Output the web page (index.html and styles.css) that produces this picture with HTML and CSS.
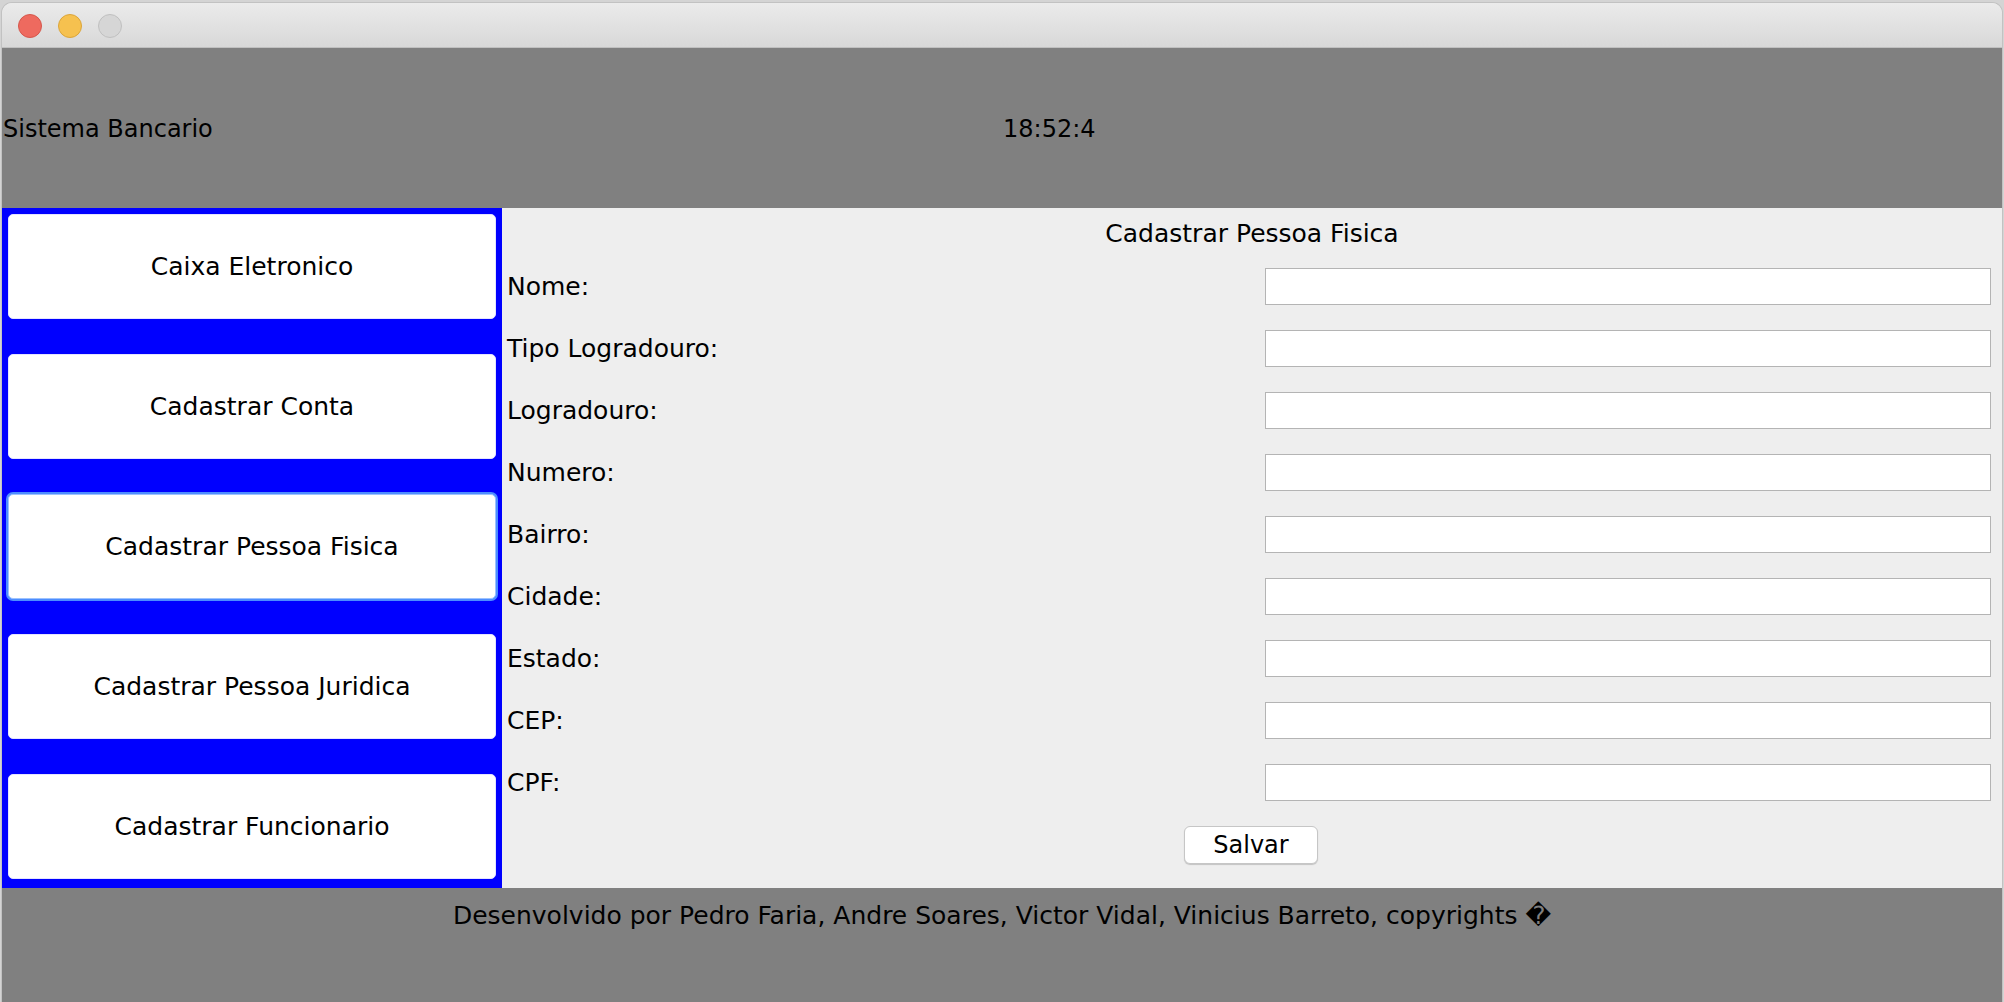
FILE: index.html
```html
<!DOCTYPE html>
<html lang="pt">
<head>
<meta charset="utf-8">
<title>Sistema Bancario</title>
<link rel="stylesheet" href="styles.css">
</head>
<body>
<div class="window">
  <div class="titlebar">
    <span class="light light-close"></span>
    <span class="light light-min"></span>
    <span class="light light-max"></span>
  </div>
  <header class="header">
    <div class="header-cell">Sistema Bancario</div>
    <div class="header-cell">18:52:4</div>
  </header>
  <div class="main">
    <nav class="sidebar">
      <button class="nav-btn">Caixa Eletronico</button>
      <button class="nav-btn">Cadastrar Conta</button>
      <button class="nav-btn nav-btn-focus">Cadastrar Pessoa Fisica</button>
      <button class="nav-btn">Cadastrar Pessoa Juridica</button>
      <button class="nav-btn">Cadastrar Funcionario</button>
    </nav>
    <section class="form">
      <div class="form-title">Cadastrar Pessoa Fisica</div>
      <div class="rows">
        <div class="row"><label class="label">Nome:</label><input class="field" type="text"></div>
        <div class="row"><label class="label">Tipo Logradouro:</label><input class="field" type="text"></div>
        <div class="row"><label class="label">Logradouro:</label><input class="field" type="text"></div>
        <div class="row"><label class="label">Numero:</label><input class="field" type="text"></div>
        <div class="row"><label class="label">Bairro:</label><input class="field" type="text"></div>
        <div class="row"><label class="label">Cidade:</label><input class="field" type="text"></div>
        <div class="row"><label class="label">Estado:</label><input class="field" type="text"></div>
        <div class="row"><label class="label">CEP:</label><input class="field" type="text"></div>
        <div class="row"><label class="label">CPF:</label><input class="field" type="text"></div>
      </div>
      <div class="actions"><button class="save-btn">Salvar</button></div>
    </section>
  </div>
  <footer class="footer">Desenvolvido por Pedro Faria, Andre Soares, Victor Vidal, Vinicius Barreto, copyrights &#xFFFD;</footer>
</div>
</body>
</html>
```
FILE: styles.css
```css
* {
  box-sizing: border-box;
}

html, body {
  margin: 0;
  padding: 0;
  height: 100%;
  overflow: hidden;
}

body {
  background: #d4d4d4;
  font-family: "DejaVu Sans", "Liberation Sans", sans-serif;
  color: #000;
}

.window {
  margin: 3px 2px 0 2px;
  width: 2000px;
  height: 999px;
  border-radius: 10px 10px 0 0;
  overflow: hidden;
  display: flex;
  flex-direction: column;
  background: #eeeeee;
  box-shadow: 0 0 0 1px #c2c2c2;
}

.titlebar {
  height: 45px;
  flex: none;
  display: flex;
  align-items: center;
  gap: 16px;
  padding: 1px 0 0 16px;
  background: linear-gradient(#ebebeb, #d8d8d8);
  border-bottom: 1px solid #c0c0c0;
}

.light {
  width: 24px;
  height: 24px;
  border-radius: 50%;
  display: block;
}

.light-close {
  background: #ee6a5f;
  border: 1px solid #d5574c;
}

.light-min {
  background: #f6c14f;
  border: 1px solid #dba53a;
}

.light-max {
  background: #d6d6d6;
  border: 1px solid #c0c0c0;
}

.header {
  height: 160px;
  flex: none;
  display: grid;
  grid-template-columns: 1fr 1fr;
  align-items: center;
  background: #808080;
  font-size: 24px;
}

.header-cell {
  padding-left: 1px;
  padding-top: 2px;
}

.main {
  height: 680px;
  flex: none;
  display: flex;
}

.sidebar {
  width: 500px;
  flex: none;
  background: #0000ff;
  padding: 6px 6px 9px 6px;
  display: flex;
  flex-direction: column;
  gap: 35px;
}

.nav-btn {
  flex: 1;
  background: #ffffff;
  border: 1px solid #e4e4ff;
  border-radius: 5px;
  font-family: inherit;
  font-size: 25px;
  color: #000;
  padding: 0;
}

.nav-btn-focus {
  border: 1px solid #9cc2ff;
  box-shadow: 0 0 0 2px #4d8dff;
}

.form {
  flex: 1;
  display: flex;
  flex-direction: column;
  background: #eeeeee;
}

.form-title {
  height: 47px;
  flex: none;
  padding-top: 11px;
  line-height: 30px;
  text-align: center;
  font-size: 25px;
}

.rows {
  display: flex;
  flex-direction: column;
  flex: none;
}

.row {
  height: 62px;
  display: grid;
  grid-template-columns: 1fr 726px;
  align-items: center;
  padding: 0 11px 0 5px;
}

.label {
  font-size: 25px;
  padding-top: 1px;
}

.field {
  height: 37px;
  width: 100%;
  margin: 0;
  border: 1px solid #b4b4b4;
  background: #ffffff;
  font-family: inherit;
  font-size: 22px;
  outline: none;
}

.actions {
  flex: 1;
  display: flex;
  justify-content: center;
  align-items: flex-start;
  padding-top: 13px;
  padding-right: 2px;
}

.save-btn {
  width: 134px;
  height: 38px;
  padding: 0;
  background: #ffffff;
  border: 1px solid #c6c6c6;
  border-radius: 6px;
  box-shadow: 0 1px 1px rgba(0, 0, 0, 0.18);
  font-family: inherit;
  font-size: 24px;
  color: #000;
}

.footer {
  flex: 1;
  background: #808080;
  text-align: center;
  font-size: 25px;
  line-height: 56px;
}
```
